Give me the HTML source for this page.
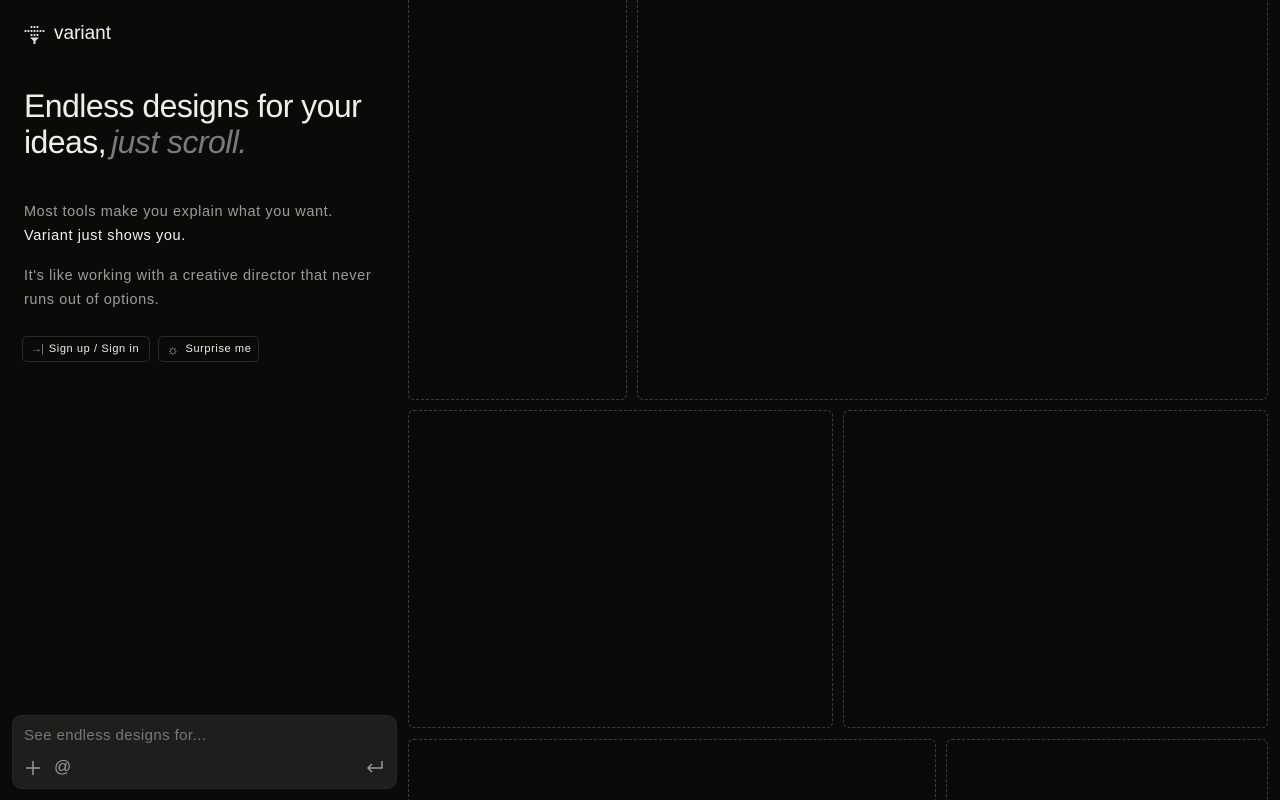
<!DOCTYPE html>
<html><head><style>
*{margin:0;padding:0;box-sizing:border-box}
html,body{width:1280px;height:800px;overflow:hidden}
body{background:#0a0a09;position:relative;font-family:"Liberation Sans",sans-serif;color:#eeede8}
.t{position:absolute;border:1px dashed #3e3e3c;border-radius:6px;background:#090908}
.btn{position:absolute;top:336px;height:26px;border:1px solid #2a2a28;border-radius:5px;font-size:11px;color:#e8e8e4;display:flex;align-items:center;padding-left:8px;letter-spacing:0.6px}
</style></head><body>
<div class="t" style="left:408px;top:-10px;width:219px;height:410px"></div>
<div class="t" style="left:637px;top:-10px;width:631px;height:410px"></div>
<div class="t" style="left:408px;top:410px;width:425px;height:318px"></div>
<div class="t" style="left:843px;top:410px;width:425px;height:318px"></div>
<div class="t" style="left:408px;top:739px;width:528px;height:80px"></div>
<div class="t" style="left:946px;top:739px;width:322px;height:80px"></div>

<svg style="position:absolute;left:24px;top:24px" width="21" height="21" viewBox="0 0 21 21" fill="#ddd">
<circle cx="1.5" cy="7" r="1.1"/><circle cx="4.5" cy="7" r="1.1"/><circle cx="7.5" cy="7" r="1.1"/><circle cx="10.5" cy="7" r="1.1"/><circle cx="13.5" cy="7" r="1.1"/><circle cx="16.5" cy="7" r="1.1"/><circle cx="19.5" cy="7" r="1.1"/>
<circle cx="7.5" cy="3" r="1.1"/><circle cx="10.5" cy="3" r="1.1"/><circle cx="13.5" cy="3" r="1.1"/>
<circle cx="7.5" cy="11" r="1.1"/><circle cx="10.5" cy="11" r="1.1"/><circle cx="13.5" cy="11" r="1.1"/>
<path d="M6 13.5h9l-4.5 4.5z"/><rect x="9.5" y="16" width="2" height="4"/>
</svg>
<div style="position:absolute;left:54px;top:23px;font-size:19px;color:#eeede8">variant</div>

<div style="position:absolute;left:24px;top:88px;font-size:32px;line-height:36px;letter-spacing:-0.55px;color:#efeee9">Endless designs for your<br>ideas,<i style="color:#7a7a78;margin-left:5px">just scroll.</i></div>

<div style="position:absolute;left:24px;top:200px;width:360px;font-size:14.5px;line-height:24px;color:#9a9a96;letter-spacing:0.6px">Most tools make you explain what you want.<br><span style="color:#eeede8">Variant just shows you.</span></div>
<div style="position:absolute;left:24px;top:264px;width:360px;font-size:14.5px;line-height:24px;color:#9a9a96;letter-spacing:0.6px">It's like working with a creative director that never runs out of options.</div>

<div class="btn" style="left:22px;width:128px"><span style="color:#888;margin-right:6px;font-size:11px;letter-spacing:-1px">→|</span>Sign up / Sign in</div>
<div class="btn" style="left:158px;width:101px"><span style="color:#aaa;margin-right:6px;font-size:13px">☼</span>Surprise me</div>

<div style="position:absolute;left:12px;top:715px;width:385px;height:74px;background:#1e1e1d;border-radius:10px;border:1px solid #262625">
<div style="position:absolute;left:11px;top:11px;font-size:15px;color:#777774;letter-spacing:0.4px">See endless designs for...</div>
<svg style="position:absolute;left:12px;top:44px" width="16" height="16" viewBox="0 0 16 16" stroke="#999" stroke-width="1.5" fill="none"><path d="M8 1v14M1 8h14"/></svg>
<div style="position:absolute;left:41px;top:41px;font-size:17px;color:#999">@</div>
<svg style="position:absolute;left:353px;top:44px" width="18" height="16" viewBox="0 0 18 16" stroke="#999" stroke-width="1.5" fill="none"><path d="M16 1v7H2M6 4L2 8l4 4"/></svg>
</div>
</body></html>
